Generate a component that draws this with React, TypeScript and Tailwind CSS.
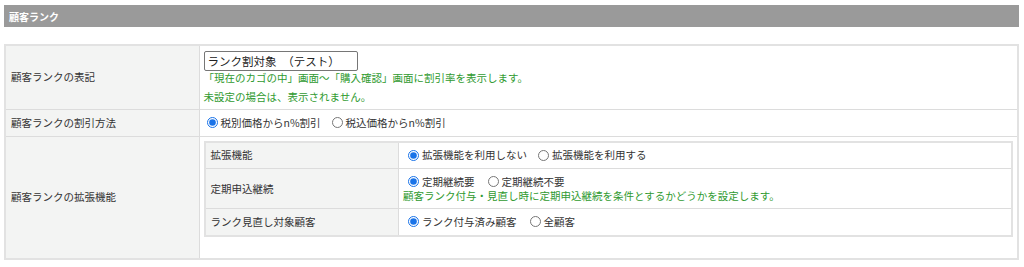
import React from "react"

const FONT = { fontFamily: '"Noto Sans CJK JP", "Noto Sans", sans-serif' }

function Radio({ label, checked }: { label: string; checked?: boolean }) {
  return (
    <label className="inline-flex items-center gap-[3px]">
      <input
        type="radio"
        checked={!!checked}
        readOnly
        className="m-0 h-[11px] w-[11px] accent-[#1a73e8]"
      />
      <span>{label}</span>
    </label>
  )
}

const LABEL = "border border-[#dcdcdc] bg-[#f3f4f3] px-[5px] text-left align-middle font-normal"
const VALUE = "border border-[#dcdcdc] bg-white px-[4px] align-middle"

export default function App() {
  return (
    <div className="w-[1024px] bg-white pt-[5px] text-[10.5px] text-[#333]" style={FONT}>
      <div className="ml-[4px] flex h-[22px] w-[1015px] items-center bg-[#9a9a9a] pl-[5px] text-[10px] font-bold text-white">
        顧客ランク
      </div>

      <table className="ml-[4px] mt-[17px] w-[1015px] border-collapse border-2 border-[#e2e2e2]">
        <tbody>
          <tr className="h-[64px]">
            <th className={`${LABEL} w-[194px]`}>顧客ランクの表記</th>
            <td className={VALUE}>
              <input
                type="text"
                readOnly
                value="ランク割対象　（テスト）"
                className="block h-[20px] w-[154px] rounded-[2px] border border-[#767676] px-[3px] text-[11.5px] text-[#222]"
              />
              <div className="leading-[14px] text-[#2f9a2f]">
                「現在のカゴの中」画面～「購入確認」画面に割引率を表示します。
              </div>
              <div className="mt-[5px] leading-[14px] text-[#2f9a2f]">未設定の場合は、表示されません。</div>
            </td>
          </tr>
          <tr className="h-[27px]">
            <th className={LABEL}>顧客ランクの割引方法</th>
            <td className={VALUE}>
              <div className="flex items-center gap-[11px] pl-[3px]">
                <Radio label="税別価格からn%割引" checked />
                <Radio label="税込価格からn%割引" />
              </div>
            </td>
          </tr>
          <tr className="h-[121px]">
            <th className={LABEL}>顧客ランクの拡張機能</th>
            <td className={`${VALUE} pt-[4px] pb-[21px]`}>
              <table className="w-full border-collapse border-2 border-[#e2e2e2]">
                <tbody>
                  <tr className="h-[27px]">
                    <th className={`${LABEL} w-[194px]`}>拡張機能</th>
                    <td className={VALUE}>
                      <div className="flex items-center gap-[11px] pl-[5px]">
                        <Radio label="拡張機能を利用しない" checked />
                        <Radio label="拡張機能を利用する" />
                      </div>
                    </td>
                  </tr>
                  <tr className="h-[40px]">
                    <th className={LABEL}>定期申込継続</th>
                    <td className={VALUE}>
                      <div className="flex items-center gap-[13px] pl-[5px] leading-[14px]">
                        <Radio label="定期継続要" checked />
                        <Radio label="定期継続不要" />
                      </div>
                      <div className="leading-[14px] text-[#2f9a2f]">
                        顧客ランク付与・見直し時に定期申込継続を条件とするかどうかを設定します。
                      </div>
                    </td>
                  </tr>
                  <tr className="h-[27px]">
                    <th className={LABEL}>ランク見直し対象顧客</th>
                    <td className={VALUE}>
                      <div className="flex items-center gap-[13px] pl-[5px]">
                        <Radio label="ランク付与済み顧客" checked />
                        <Radio label="全顧客" />
                      </div>
                    </td>
                  </tr>
                </tbody>
              </table>
            </td>
          </tr>
        </tbody>
      </table>
    </div>
  )
}
